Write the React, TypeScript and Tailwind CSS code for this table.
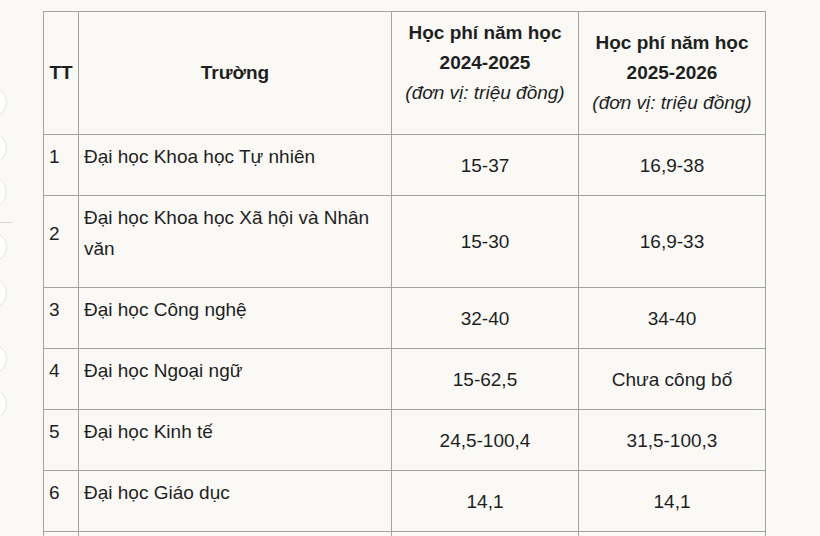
import React from 'react';

type Row = { tt: string; name: string; a: string; b: string };

const rows: Row[] = [
  { tt: '1', name: 'Đại học Khoa học Tự nhiên', a: '15-37', b: '16,9-38' },
  { tt: '2', name: 'Đại học Khoa học Xã hội và Nhân văn', a: '15-30', b: '16,9-33' },
  { tt: '3', name: 'Đại học Công nghệ', a: '32-40', b: '34-40' },
  { tt: '4', name: 'Đại học Ngoại ngữ', a: '15-62,5', b: 'Chưa công bố' },
  { tt: '5', name: 'Đại học Kinh tế', a: '24,5-100,4', b: '31,5-100,3' },
  { tt: '6', name: 'Đại học Giáo dục', a: '14,1', b: '14,1' },
];

const circles = [102, 148, 192, 247, 293, 359, 404];

function ShareRail() {
  return (
    <div className="pointer-events-none absolute left-0 top-0">
      {circles.map((y) => (
        <div
          key={y}
          className="absolute left-[-25px] h-[32px] w-[32px] rounded-full border border-[#e6e5e2] bg-white"
          style={{ top: y - 16 }}
        />
      ))}
      <div className="absolute left-0 top-[222px] h-px w-[12px] bg-[#d6d5d2]" />
    </div>
  );
}

const cell = 'border border-[#a3a3a3] px-[5px] py-[6px] align-middle';

export default function App() {
  return (
    <div
      className="relative min-h-screen bg-[#faf9f6] pl-[43px] pt-[11px] text-[#1f1f1f]"
      style={{ fontFamily: '"Liberation Sans", Arial, sans-serif' }}
    >
      <ShareRail />
      <table className="w-[722px] table-fixed border-collapse text-[19px]">
        <colgroup>
          <col className="w-[35px]" />
          <col className="w-[313px]" />
          <col className="w-[187px]" />
          <col className="w-[187px]" />
        </colgroup>
        <thead>
          <tr className="leading-[30px]">
            <th className={`${cell} text-center font-bold`}>TT</th>
            <th className={`${cell} text-center font-bold`}>Trường</th>
            <th className={`${cell} text-center`}>
              <p className="mb-[20px]">
                <b>Học phí năm học 2024-2025</b>
                <br />
                <i className="font-normal">(đơn vị: triệu đồng)</i>
              </p>
            </th>
            <th className={`${cell} text-center`}>
              <b>Học phí năm học 2025-2026</b>
              <br />
              <i className="font-normal">(đơn vị: triệu đồng)</i>
            </th>
          </tr>
        </thead>
        <tbody className="leading-[31px]">
          {rows.map((r) => (
            <tr key={r.tt}>
              <td className={cell}>
                <p className="mb-[17px]">{r.tt}</p>
              </td>
              <td className={cell}>
                <p className="mb-[17px]">{r.name}</p>
              </td>
              <td className={`${cell} text-center`}>{r.a}</td>
              <td className={`${cell} text-center`}>{r.b}</td>
            </tr>
          ))}
          {/* next row continues below the fold */}
          <tr className="h-[62px]">
            <td className={cell} />
            <td className={cell} />
            <td className={cell} />
            <td className={cell} />
          </tr>
        </tbody>
      </table>
    </div>
  );
}
